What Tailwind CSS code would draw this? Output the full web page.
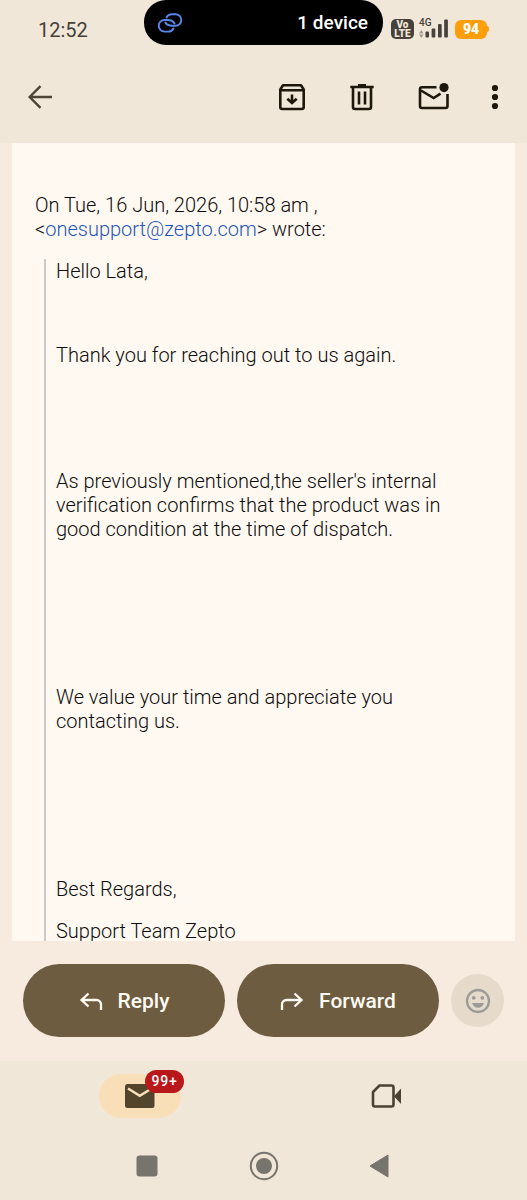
<!DOCTYPE html>
<html lang="en">
<head>
    <meta charset="UTF-8">
    <meta name="viewport" content="width=device-width, initial-scale=1.0">
    <title>Mail</title>
    <script src="https://cdn.jsdelivr.net/npm/@tailwindcss/browser@4"></script>
</head>
<body class="flex h-screen flex-col bg-[#f0e7d8] font-[Roboto,sans-serif]">

    <!-- status bar -->
    <div class="grid h-[49px] shrink-0 grid-cols-[1fr_239px_1fr] items-start text-[#46413a]">
      <div class="pl-[38px] pt-[15px] text-[20px] leading-[30px]">12:52</div>
      <div class="flex h-[45px] items-center justify-between rounded-[22px] bg-black pl-[13px] pr-[15px] text-white">
        <svg class="h-[20px] w-[26px]" viewBox="0 0 26 20" fill="none" stroke="#5b87ea" stroke-width="1.900" stroke-linecap="round">
          <path d="M9.500 4.500 C10.500 2.200 12.500 1.200 15 1.200 H18.500 A5.800 5.800 0 0 1 18.500 12.800 H15.500 C12 12.800 9.500 11.500 8.500 9.500"/>
          <path d="M16.500 15.500 C15.500 17.600 13.500 18.600 11 18.600 H7.500 A5.800 5.800 0 0 1 7.500 7 H10.500 C14 7 16.500 8.500 17.500 10.500"/>
        </svg>
        <span class="text-[19px] font-medium leading-[24px]">1 device</span>
      </div>
      <div class="flex items-center gap-[5px] pl-[8px] pt-[19px]">
        <div class="h-[20px] w-[23px] rounded-[5px] bg-[#46413a] pt-[1px] text-center text-[10px] font-black leading-[9px] text-[#f0e7d8]">Vo<br>LTE</div>
        <div class="relative h-[20px] w-[29px]">
          <span class="absolute left-0 top-[-1px] text-[10px] font-medium leading-[10px]">4G</span>
          <svg class="h-[20px] w-[29px]" viewBox="0 0 29 20" fill="#46413a">
            <path d="M0 14.500 L2.300 11 L4.600 14.500Z M0 15.500 L2.300 19 L4.600 15.500Z" fill="#a39b8e"/>
            <rect x="6.500" y="12.500" width="3.500" height="6" rx="1"/>
            <rect x="12.600" y="9.500" width="3.700" height="9" rx="1"/>
            <rect x="19" y="5" width="3.700" height="13.500" rx="1"/>
            <rect x="25.200" y="0.500" width="3.700" height="18" rx="1"/>
          </svg>
        </div>
        <div class="flex items-center pl-[2px]">
          <div class="h-[19px] w-[32px] rounded-[6px] bg-[#fd9e0b] text-center text-[14px] font-black leading-[19px] text-white">94</div>
          <div class="h-[6px] w-[2px] rounded-r bg-[#fd9e0b]"></div>
        </div>
      </div>
    </div>

    <!-- toolbar -->
    <header class="flex h-[94px] shrink-0 items-center justify-between pl-[28px] pr-[28px] pt-[1px] text-[#1e170c]">
      <button aria-label="Back">
        <svg class="h-[24px] w-[24px]" viewBox="0 0 24 24" fill="none" stroke="#4d4538" stroke-width="2.400">
          <path d="M24 12 H2 M12.500 1.200 L1.700 12 L12.500 22.800"/>
        </svg>
      </button>
      <div class="flex items-center">
        <button aria-label="Archive" class="mr-[43px]">
          <svg class="h-[28px] w-[28px]" viewBox="0 0 28 28" fill="none" stroke="currentColor" stroke-width="2.600" stroke-linejoin="round">
            <path d="M2.300 6.500 L5 2.300 H23 L25.700 6.500 V24 a2 2 0 0 1 -2 2 H4.300 a2 2 0 0 1 -2 -2 Z M2.300 7.300 H25.700"/>
            <path d="M14 11.500 V19 M9.300 15.700 L14 20 L18.700 15.700" stroke-linejoin="miter"/>
          </svg>
        </button>
        <button aria-label="Delete" class="mr-[43px]">
          <svg class="h-[28px] w-[26px]" viewBox="0 0 26 28" fill="none" stroke="currentColor" stroke-width="2.600">
            <path d="M1.300 4 H24.700 M9 2.200 H17"/>
            <path d="M4 4 V24 a2 2 0 0 0 2 2 H20 a2 2 0 0 0 2 -2 V4"/>
            <path d="M10 8.500 V21.500 M16 8.500 V21.500"/>
          </svg>
        </button>
        <button aria-label="Mark as unread" class="mr-[42px]">
          <svg class="h-[28px] w-[31px]" viewBox="0 0 31 28" fill="none" stroke="currentColor" stroke-width="2.600">
            <path d="M18.500 4.300 H4 a2 2 0 0 0 -2 2 V23 a2 2 0 0 0 2 2 H27.500 a2 2 0 0 0 2 -2 V11"/>
            <path d="M3 7.500 L15.700 15 L22.500 10.700"/>
            <circle cx="26" cy="4.600" r="4.600" fill="currentColor" stroke="none"/>
          </svg>
        </button>
        <button aria-label="More options">
          <svg class="h-[28px] w-[8px]" viewBox="0 0 8 28" fill="currentColor">
            <circle cx="4" cy="5" r="3.100"/>
            <circle cx="4" cy="14" r="3.100"/>
            <circle cx="4" cy="23" r="3.100"/>
          </svg>
        </button>
      </div>
    </header>

    <!-- message -->
    <main class="flex min-h-0 flex-1 flex-col bg-[#f7ebe0]">
      <article class="mx-[12px] min-h-0 flex-1 overflow-hidden bg-[#fff9f2] px-[23px] pt-[50px] text-[20px] font-light leading-[24px] text-[#0d0d0d]">
        <p class="mb-[18px]">On Tue, 16 Jun, 2026, 10:58 am ,<br>&lt;<a href="mailto:onesupport@zepto.com" class="text-[#1f56b8]">onesupport@zepto.com</a>&gt; wrote:</p>
        <blockquote class="ml-[9px] flex flex-col gap-[18px] border-l-2 border-[#cccac6] pl-[10px] pr-[20px]">
          <p>Hello Lata,</p>
          <p><br></p>
          <p>Thank you for reaching out to us again.</p>
          <p><br></p>
          <p><br></p>
          <p>As previously mentioned,the seller's internal verification confirms that the product was in good condition at the time of dispatch.</p>
          <p><br></p>
          <p><br></p>
          <p><br></p>
          <p>We value your time and appreciate you contacting us.</p>
          <p><br></p>
          <p><br></p>
          <p><br></p>
          <p>Best Regards,</p>
          <p>Support Team Zepto</p>
        </blockquote>
      </article>

      <!-- reply / forward -->
      <div class="flex shrink-0 items-center gap-[12px] px-[23px] pb-[24px] pt-[23px] text-[21px] font-medium text-[#fffaf2]">
        <button class="flex h-[73px] flex-1 items-center justify-center gap-[15px] rounded-full bg-[#6d5c3f] pt-[2px]">
          <svg class="h-[20px] w-[24px]" viewBox="0 0 24 20" fill="none" stroke="currentColor" stroke-width="2.300">
            <path d="M9.500 1.500 L2.500 8 L9.500 14.500 M2.500 8 H17.500 a4.500 4.500 0 0 1 4.500 4.500 V18"/>
          </svg>
          Reply
        </button>
        <button class="flex h-[73px] flex-1 items-center justify-center gap-[15px] rounded-full bg-[#6d5c3f] pt-[2px]">
          <svg class="h-[20px] w-[24px]" viewBox="0 0 24 20" fill="none" stroke="currentColor" stroke-width="2.300">
            <path d="M14.500 1.500 L21.500 8 L14.500 14.500 M21.500 8 H6.500 a4.500 4.500 0 0 0 -4.500 4.500 V18"/>
          </svg>
          Forward
        </button>
        <button aria-label="Add emoji reaction" class="flex h-[53px] w-[53px] items-center justify-center rounded-full bg-[#e6dbcb]">
          <svg class="h-[26px] w-[26px]" viewBox="0 0 26 26" fill="#9c9b98">
            <circle cx="13" cy="13" r="11" fill="none" stroke="#9c9b98" stroke-width="2.300"/>
            <circle cx="8.700" cy="9.800" r="1.900"/>
            <circle cx="17.300" cy="9.800" r="1.900"/>
            <path d="M7 15 H19 C18 18 16 19.700 13 19.700 C10 19.700 8 18 7 15Z"/>
          </svg>
        </button>
      </div>
    </main>

    <!-- tabs -->
    <nav class="grid h-[70px] shrink-0 grid-cols-2 pt-[13px]">
      <a href="#" aria-label="Mail" class="relative ml-[99px] flex h-[44px] w-[82px] items-center justify-center rounded-full bg-[#f9dfb8]">
        <svg class="h-[24px] w-[30px]" viewBox="0 0 30 24">
          <rect width="29.500" height="24" rx="2.500" fill="#53452b"/>
          <path d="M3 4.500 L14.800 11.800 L26.600 4.500" fill="none" stroke="#f9dfb8" stroke-width="2.600"/>
        </svg>
        <span class="absolute left-[46px] top-[-4px] h-[23px] w-[39px] rounded-full bg-[#b9181b] text-center text-[14px] font-medium leading-[23px] tracking-wider text-white">99+</span>
      </a>
      <a href="#" aria-label="Meet" class="ml-[107px] flex h-[44px] items-center">
        <svg class="h-[24px] w-[31px]" viewBox="0 0 31 24" fill="none" stroke="#4a4234" stroke-width="2.600">
          <path d="M8.500 1.500 H20.500 a2 2 0 0 1 2 2 V20.500 a2 2 0 0 1 -2 2 H4 a2 2 0 0 1 -2 -2 V8Z" stroke-linejoin="round"/>
          <path d="M30 4.500 V20 L23 12.300Z" fill="#4a4234" stroke="none"/>
        </svg>
      </a>
    </nav>

    <!-- system buttons -->
    <div class="grid h-[69px] shrink-0 grid-cols-[1fr_30px_1fr] items-center text-[#77736d]">
      <button aria-label="Recent apps" class="ml-auto mr-[91px]">
        <svg class="h-[22px] w-[22px]" viewBox="0 0 22 22" fill="currentColor"><rect x="0.500" y="0.500" width="21" height="21" rx="3"/></svg>
      </button>
      <button aria-label="Home">
        <svg class="h-[30px] w-[30px]" viewBox="0 0 30 30" fill="currentColor">
          <circle cx="15" cy="15" r="13.200" fill="none" stroke="currentColor" stroke-width="2"/>
          <circle cx="15" cy="15" r="8"/>
        </svg>
      </button>
      <button aria-label="Go back" class="ml-[90px] mr-auto">
        <svg class="h-[24px] w-[20px]" viewBox="0 0 20 24" fill="currentColor" stroke="currentColor" stroke-linejoin="round"><path d="M1 12 L19 1 V23Z"/></svg>
      </button>
    </div>

</body>
</html>
